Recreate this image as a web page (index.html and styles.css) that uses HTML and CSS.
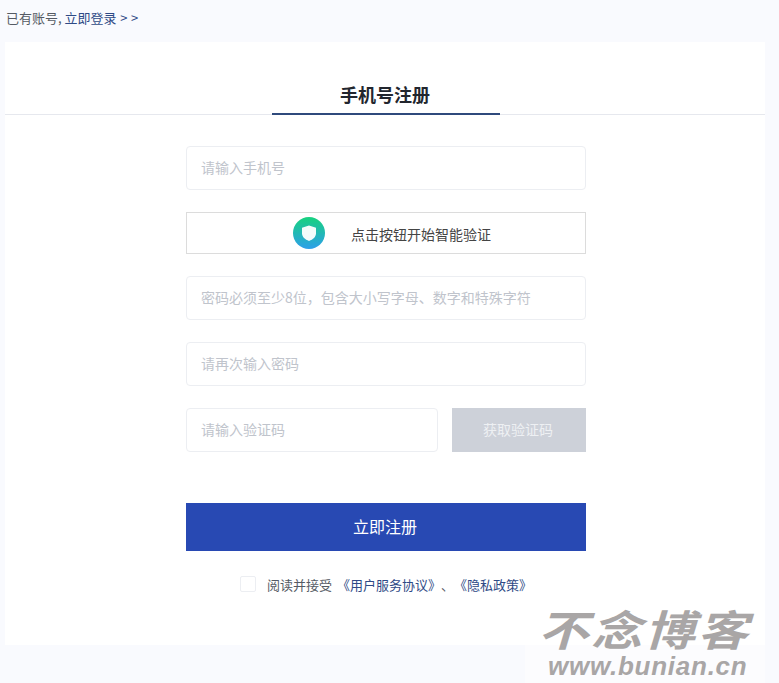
FILE: index.html
```html
<!DOCTYPE html>
<html lang="zh-CN">

<head>
    <meta charset="UTF-8">
    <meta name="viewport" content="width=device-width, initial-scale=1.0">
    <title>手机号注册</title>
    <link rel="stylesheet" href="styles.css">
</head>

<body>
    <div class="top-link">已有账号, <a href="#">立即登录 &gt; &gt;</a></div>

    <div class="card">
        <div class="tabs">
            <div class="tab">手机号注册</div>
        </div>

        <form class="form">
            <input class="field" type="text" placeholder="请输入手机号">

            <div class="captcha">
                <span class="captcha-icon">
                    <svg width="32" height="32" viewBox="0 0 32 32">
                        <defs>
                            <linearGradient id="shield-bg" x1="0" y1="0" x2="0" y2="1">
                                <stop offset="0" stop-color="#17d27e" />
                                <stop offset="1" stop-color="#2d9fea" />
                            </linearGradient>
                        </defs>
                        <circle cx="16" cy="16" r="16" fill="url(#shield-bg)" />
                        <path d="M16 8.500l7 2.200v5.600c0 3.800-3 6.200-7 7.700-4-1.500-7-3.900-7-7.700v-5.600z" fill="#fff" opacity="0.95" />
                    </svg>
                </span>
                <span class="captcha-text">点击按钮开始智能验证</span>
            </div>

            <input class="field" type="password" placeholder="密码必须至少8位，包含大小写字母、数字和特殊字符">
            <input class="field" type="password" placeholder="请再次输入密码">

            <div class="code-row">
                <input class="field code-input" type="text" placeholder="请输入验证码">
                <div class="code-button">获取验证码</div>
            </div>

            <div class="submit">立即注册</div>

            <label class="agree">
                <span class="checkbox"></span>
                <span class="agree-text">阅读并接受</span>
                <a href="#">《用户服务协议》</a><span class="sep">、</span><a href="#">《隐私政策》</a>
            </label>
        </form>
    </div>

    <div class="watermark">
        <div class="watermark-name">不念博客</div>
        <div class="watermark-url">www.bunian.cn</div>
    </div>
</body>

</html>
```

FILE: styles.css
```css
:root {
    --page-background: #f9fafe;
    --line-color: #e6e8ee;
    --link-color: #2f4a86;
    --text-color: #555a64;
    --placeholder-color: #c0c4cc;
}

* {
    box-sizing: border-box;
}

html,
body {
    height: 100%;
}

body {
    position: relative;
    margin: 0;
    overflow: hidden;
    font-family: "Noto Sans CJK SC", "Noto Sans", sans-serif;
    background-color: var(--page-background);
    color: var(--text-color);
}

a {
    text-decoration: none;
    color: var(--link-color);
}

.top-link {
    height: 42px;
    padding: 8px 0 0 6px;
    font-size: 13px;
    line-height: 20px;
}

.top-link a {
    word-spacing: 0.7px;
}

.card {
    width: 760px;
    height: 603px;
    margin-left: 5px;
    background-color: #ffffff;
}

.tabs {
    display: flex;
    justify-content: center;
    height: 73px;
    padding-left: 2px;
    border-bottom: 1px solid var(--line-color);
}

.tab {
    width: 228px;
    height: 73px;
    padding: 39px 2px 0 0;
    border-bottom: 2px solid #2f4a7c;
    font-size: 18px;
    font-weight: 700;
    line-height: 27px;
    text-align: center;
    color: #22262e;
}

.form {
    display: flex;
    flex-direction: column;
    gap: 22px;
    width: 400px;
    margin: 31px 0 0 181px;
}

.field {
    width: 100%;
    height: 44px;
    padding: 0 14px 2px;
    border: 1px solid #eceef2;
    border-radius: 4px;
    outline: none;
    background: #ffffff;
    font-family: inherit;
    font-size: 14px;
}

.field::placeholder {
    color: var(--placeholder-color);
    opacity: 1;
}

.captcha {
    display: flex;
    align-items: center;
    height: 42px;
    padding-left: 106px;
    border: 1px solid #dcdcdc;
    font-size: 14px;
    color: #444444;
}

.captcha-icon {
    display: flex;
    width: 32px;
    height: 32px;
    margin-right: 26px;
}

.captcha-text {
    padding-top: 1px;
}

.code-row {
    display: flex;
    justify-content: space-between;
}

.code-input {
    width: 252px;
}

.code-button {
    width: 134px;
    height: 44px;
    padding-right: 2px;
    background-color: #cdd1d9;
    color: #eef0f3;
    font-size: 14px;
    line-height: 42px;
    text-align: center;
}

.submit {
    height: 48px;
    margin-top: 29px;
    padding-right: 2px;
    background-color: #2849b3;
    color: #ffffff;
    font-size: 16px;
    line-height: 46px;
    text-align: center;
}

.agree {
    display: flex;
    align-items: center;
    justify-content: center;
    height: 24px;
    margin-top: -1px;
    font-size: 13px;
}

.checkbox {
    width: 16px;
    height: 16px;
    margin-right: 11px;
    border: 1px solid #eceef2;
    border-radius: 2px;
    background: #ffffff;
}

.agree-text {
    margin-right: 5px;
}

.watermark {
    position: absolute;
    right: 14px;
    bottom: 0;
    width: 240px;
    height: 83px;
    padding: 11px 0 0 13px;
    background-color: rgba(255, 255, 255, 0.45);
    color: #a9a6a6;
    font-family: "Liberation Sans", "Noto Sans CJK SC", sans-serif;
    font-style: italic;
    font-weight: 700;
    pointer-events: none;
}

.watermark-name {
    font-size: 42px;
    letter-spacing: 2.3px;
    line-height: 42px;
    white-space: nowrap;
    transform: scaleX(1.2);
    transform-origin: left center;
}

.watermark-url {
    margin: -2px 0 0 10px;
    font-size: 26px;
    letter-spacing: 0.75px;
    line-height: 30px;
    white-space: nowrap;
}
```
